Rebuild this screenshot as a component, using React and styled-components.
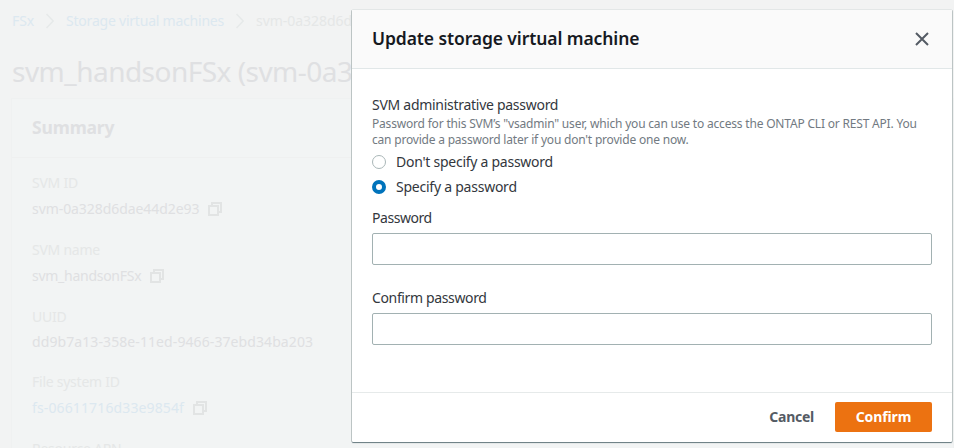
import React from 'react';
import styled, { createGlobalStyle } from 'styled-components';

const GlobalStyle = createGlobalStyle`
  * { box-sizing: border-box; }
  body {
    margin: 0;
    overflow: hidden;
    background: #f2f3f3;
    font-family: "Noto Sans", sans-serif;
    font-size: 14px;
    line-height: 22px;
    color: #16191f;
  }
`;

const Screen = styled.div`
  position: relative;
  height: 448px;
  overflow: hidden;
`;

const Page = styled.main`
  height: 448px;
  overflow: hidden;
  padding: 10px 0 0 12px;
  color: #dfe0e2;
`;

const Tracked = styled.span`
  letter-spacing: ${(p) => p.$track || 0}px;
  white-space: nowrap;
`;

const Breadcrumbs = styled.nav`
  display: flex;
  align-items: center;
  height: 22px;
`;

const Crumb = styled(Tracked)`
  color: ${(p) => (p.$current ? '#e5e7e7' : '#dce8f0')};
`;

const Chevron = styled.svg`
  width: 8px;
  height: 16px;
  margin: 0 12px;
  flex: none;
`;

const Heading = styled.h1`
  margin: 21px 0 0;
  font-size: 28px;
  line-height: 36px;
  font-weight: 400;
  letter-spacing: -0.52px;
  white-space: nowrap;
`;

const Panel = styled.section`
  margin-top: 9px;
  margin-left: -1px;
  height: 400px;
  background: #f2f4f4;
  border: 1px solid #eff1f1;
`;

const PanelHeader = styled.header`
  height: 59px;
  padding: 17px 20px 0;
  border-bottom: 1px solid #eff0f0;
`;

const PanelTitle = styled.h2`
  margin: 0;
  font-size: 17.5px;
  font-weight: 700;
  letter-spacing: -0.15px;
`;

const Details = styled.dl`
  margin: 0;
  padding: 14px 20px 0;
`;

const Detail = styled.div`
  height: ${(p) => (p.$plain ? 65 : 67)}px;
`;

const Term = styled.dt`
  color: #e5e7e7;
  letter-spacing: ${(p) => p.$track || 0}px;
`;

const Value = styled.dd`
  display: flex;
  align-items: center;
  gap: 9px;
  margin: ${(p) => (p.$plain ? 3 : 4)}px 0 0;
  color: ${(p) => (p.$link ? '#dce8f0' : '#dfe0e2')};
`;

const CopyGlyph = styled.svg`
  width: 14px;
  height: 14px;
  flex: none;
`;

const Overlay = styled.div`
  position: absolute;
  inset: 0;
  display: flex;
  justify-content: flex-end;
  align-items: flex-start;
  padding: 10px 2px 0 0;
`;

const Dialog = styled.div`
  display: flex;
  flex-direction: column;
  width: 600px;
  height: 432px;
  background: #fff;
  border-radius: 1px;
  box-shadow: 0 -1px 0 #e3e7e7, 0 1px 1px #63777d, 1px 0 0 #c6cdcd, -1px 0 0 #c6cdcd;
`;

const DialogHeader = styled.header`
  display: flex;
  align-items: center;
  justify-content: space-between;
  flex: none;
  height: 59px;
  padding: 0 23px 0 20px;
  background: #fafafa;
  border-bottom: 1px solid #e1e7e8;
`;

const DialogTitle = styled.h2`
  margin: 0 0 2px;
  font-size: 17.5px;
  line-height: 22px;
  font-weight: 600;
  letter-spacing: -0.1px;
`;

const CloseButton = styled.button`
  display: flex;
  padding: 0;
  border: 0;
  background: none;
  svg { width: 14px; height: 14px; }
`;

const DialogBody = styled.div`
  flex: 1;
  padding: 25px 20px 0;
`;

const Label = styled.label`
  display: block;
  color: #33373d;
  letter-spacing: ${(p) => p.$track || 0}px;
`;

const Description = styled.div`
  display: flex;
  flex-direction: column;
  font-size: 12px;
  line-height: 16px;
  color: #727a82;
  margin-bottom: 3px;
`;

const RadioRow = styled.div`
  display: flex;
  align-items: center;
  gap: 10px;
  height: 22px;
  color: #33373d;
  & + & { margin-top: 3px; }
`;

const Radio = styled.span`
  width: 14px;
  height: 14px;
  flex: none;
  border-radius: 50%;
  background: #fff;
  border: ${(p) => (p.$checked ? '4px solid #0073bb' : '1px solid #aab7b8')};
`;

const Field = styled.div`
  margin-top: ${(p) => p.$gap}px;
`;

const Input = styled.input`
  display: block;
  width: 100%;
  height: 32px;
  margin-top: 4px;
  padding: 4px 10px;
  border: 1px solid #a2b1b2;
  border-radius: 2px;
  background: #fff;
  outline: none;
`;

const DialogFooter = styled.footer`
  display: flex;
  justify-content: flex-end;
  align-items: flex-start;
  flex: none;
  height: 50px;
  padding: 9px 20px 0;
  border-top: 1px solid #e6eaea;
`;

const Button = styled.button`
  height: 30px;
  padding: 0 ${(p) => (p.$primary ? 0 : 21)}px;
  width: ${(p) => (p.$primary ? '97px' : 'auto')};
  border: 0;
  border-radius: 2px;
  background: ${(p) => (p.$primary ? '#ec7211' : 'transparent')};
  color: ${(p) => (p.$primary ? '#fff' : '#545b64')};
  font: 700 14px/22px "Noto Sans", sans-serif;
  letter-spacing: ${(p) => (p.$primary ? -0.1 : -0.25)}px;
`;

const Separator = () => (
  <Chevron viewBox="0 0 8 16" fill="none" stroke="#e6e9e9" strokeWidth="1.5">
    <path d="M0.5 1 7.2 8 0.5 15" />
  </Chevron>
);

const CopyIcon = () => (
  <CopyGlyph viewBox="0 0 14 14" fill="none" stroke="#e2e4e4" strokeWidth="2">
    <path d="M1 4h9v9H1z" />
    <path d="M4 4V1h9v9h-3" />
  </CopyGlyph>
);

const details = [
  { term: 'SVM ID', value: 'svm-0a328d6dae44d2e93', track: -0.07, copy: true },
  { term: 'SVM name', value: 'svm_handsonFSx', track: -0.27, copy: true },
  { term: 'UUID', value: 'dd9b7a13-358e-11ed-9466-37ebd34ba203', track: 0.09 },
  { term: 'File system ID', value: 'fs-06611716d33e9854f', track: 0.13, copy: true, link: true },
  { term: 'Resource ARN', value: '', track: 0 },
];

export default function App() {
  return (
    <Screen>
      <GlobalStyle />
      <Page>
        <Breadcrumbs>
          <Crumb $track={-0.1}>FSx</Crumb>
          <Separator />
          <Crumb $track={-0.22}>Storage virtual machines</Crumb>
          <Separator />
          <Crumb $current $track={-0.04}>svm-0a328d6dae44d2e93</Crumb>
        </Breadcrumbs>
        <Heading>svm_handsonFSx (svm-0a328d6dae44d2e93)</Heading>
        <Panel>
          <PanelHeader>
            <PanelTitle>Summary</PanelTitle>
          </PanelHeader>
          <Details>
            {details.map((d) => (
              <Detail key={d.term} $plain={!d.copy}>
                <Term $track={-0.25}>{d.term}</Term>
                <Value $link={d.link} $plain={!d.copy}>
                  <Tracked $track={d.track}>{d.value}</Tracked>
                  {d.copy && <CopyIcon />}
                </Value>
              </Detail>
            ))}
          </Details>
        </Panel>
      </Page>
      <Overlay>
        <Dialog role="dialog">
          <DialogHeader>
            <DialogTitle>Update storage virtual machine</DialogTitle>
            <CloseButton aria-label="Close">
              <svg viewBox="0 0 14 14" fill="none" stroke="#545b64" strokeWidth="2">
                <path d="M1 1l12 12M13 1 1 13" />
              </svg>
            </CloseButton>
          </DialogHeader>
          <DialogBody>
            <Label as="div" $track={-0.28}>SVM administrative password</Label>
            <Description>
              <Tracked $track={-0.19}>Password for this SVM’s "vsadmin" user, which you can use to access the ONTAP CLI or REST API. You</Tracked>
              <Tracked $track={-0.2}>can provide a password later if you don't provide one now.</Tracked>
            </Description>
            <RadioRow>
              <Radio />
              <Tracked $track={-0.26}>Don't specify a password</Tracked>
            </RadioRow>
            <RadioRow>
              <Radio $checked />
              <Tracked $track={-0.24}>Specify a password</Tracked>
            </RadioRow>
            <Field $gap={9}>
              <Label htmlFor="password" $track={-0.46}>Password</Label>
              <Input id="password" type="password" />
            </Field>
            <Field $gap={22}>
              <Label htmlFor="confirm" $track={-0.36}>Confirm password</Label>
              <Input id="confirm" type="password" />
            </Field>
          </DialogBody>
          <DialogFooter>
            <Button>Cancel</Button>
            <Button $primary>Confirm</Button>
          </DialogFooter>
        </Dialog>
      </Overlay>
    </Screen>
  );
}
